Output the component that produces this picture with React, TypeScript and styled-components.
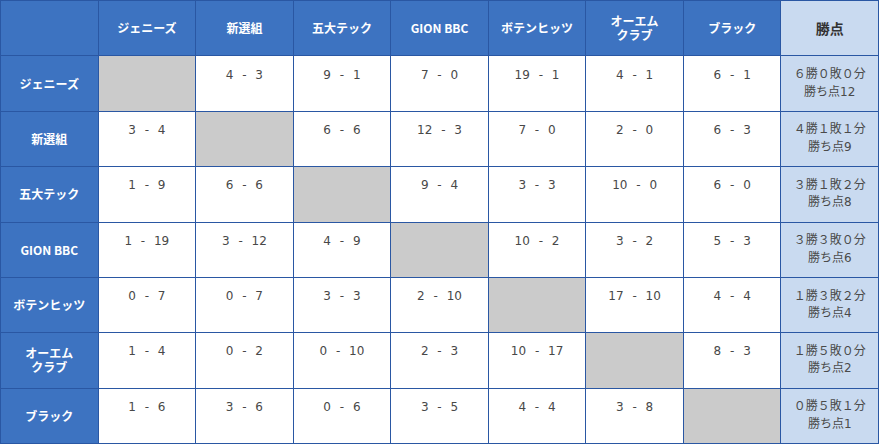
import React from "react";
import styled, { createGlobalStyle } from "styled-components";

const GlobalStyle = createGlobalStyle`
  html, body { margin: 0; padding: 0; background: #ffffff; }
  body { font-family: "Noto Sans CJK JP", "DejaVu Sans", sans-serif; }
`;

const Grid = styled.div`
  display: grid;
  grid-template-columns: repeat(9, 1fr);
  grid-template-rows: repeat(8, 1fr);
  gap: 1px;
  padding: 1px;
  width: 879px;
  height: 444px;
  box-sizing: border-box;
  background: #2a57a3;
`;

const HeadCell = styled.div<{ $points?: boolean }>`
  display: flex;
  align-items: center;
  justify-content: center;
  text-align: center;
  background: ${(p) => (p.$points ? "#c9daf0" : "#3d73c1")};
  color: ${(p) => (p.$points ? "#333333" : "#ffffff")};
  font-family: "Noto Sans CJK JP", sans-serif;
  font-weight: 700;
  font-size: ${(p) => (p.$points ? "14px" : "12px")};
  line-height: 14px;
  white-space: pre-line;
`;

const ScoreCell = styled.div<{ $blank?: boolean }>`
  display: flex;
  align-items: center;
  justify-content: center;
  background: ${(p) => (p.$blank ? "#cbcbcb" : "#ffffff")};
  color: #484848;
  font-family: "DejaVu Sans", "Noto Sans CJK JP", sans-serif;
  font-size: 12px;
  line-height: 17px;
  word-spacing: 5px;
  padding-bottom: 17px;
  box-sizing: border-box;
`;

const PointsCell = styled.div`
  display: flex;
  flex-direction: column;
  align-items: center;
  justify-content: center;
  background: #c9daf0;
  color: #4a4a4a;
  font-family: "DejaVu Sans", "Noto Sans CJK JP", sans-serif;
  font-size: 12px;
  line-height: 17.5px;
`;

const teams = [
  "ジェニーズ",
  "新選組",
  "五大テック",
  "GION BBC",
  "ボテンヒッツ",
  "オーエム\nクラブ",
  "ブラック",
];

const scores: (string | null)[][] = [
  [null, "4 - 3", "9 - 1", "7 - 0", "19 - 1", "4 - 1", "6 - 1"],
  ["3 - 4", null, "6 - 6", "12 - 3", "7 - 0", "2 - 0", "6 - 3"],
  ["1 - 9", "6 - 6", null, "9 - 4", "3 - 3", "10 - 0", "6 - 0"],
  ["1 - 19", "3 - 12", "4 - 9", null, "10 - 2", "3 - 2", "5 - 3"],
  ["0 - 7", "0 - 7", "3 - 3", "2 - 10", null, "17 - 10", "4 - 4"],
  ["1 - 4", "0 - 2", "0 - 10", "2 - 3", "10 - 17", null, "8 - 3"],
  ["1 - 6", "3 - 6", "0 - 6", "3 - 5", "4 - 4", "3 - 8", null],
];

const records = [
  ["６勝０敗０分", "勝ち点12"],
  ["４勝１敗１分", "勝ち点9"],
  ["３勝１敗２分", "勝ち点8"],
  ["３勝３敗０分", "勝ち点6"],
  ["１勝３敗２分", "勝ち点4"],
  ["１勝５敗０分", "勝ち点2"],
  ["０勝５敗１分", "勝ち点1"],
];

export default function App() {
  return (
    <>
      <GlobalStyle />
      <Grid>
        <HeadCell />
        {teams.map((t) => (
          <HeadCell key={t}>{t}</HeadCell>
        ))}
        <HeadCell $points>勝点</HeadCell>
        {teams.map((t, r) => (
          <React.Fragment key={t}>
            <HeadCell>{t}</HeadCell>
            {scores[r].map((s, c) => (
              <ScoreCell key={c} $blank={s === null}>
                {s ?? ""}
              </ScoreCell>
            ))}
            <PointsCell>
              <span>{records[r][0]}</span>
              <span>{records[r][1]}</span>
            </PointsCell>
          </React.Fragment>
        ))}
      </Grid>
    </>
  );
}
